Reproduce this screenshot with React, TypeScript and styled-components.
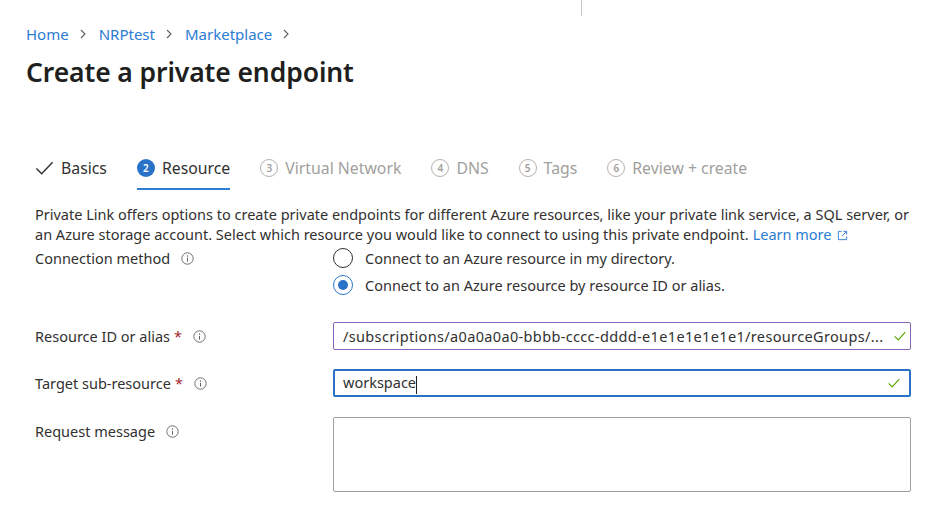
import React from "react";
import styled, { createGlobalStyle } from "styled-components";

const GlobalStyle = createGlobalStyle`
  body {
    margin: 0;
    background: #ffffff;
    font-family: "Noto Sans", "Open Sans", sans-serif;
    color: #323130;
  }
`;

const Page = styled.div`
  position: relative;
  width: 940px;
  height: 530px;
  overflow: hidden;
  padding: 22px 0 0 26px;
  box-sizing: border-box;
`;

const TopDivider = styled.div`
  position: absolute;
  left: 581px;
  top: 0;
  width: 1px;
  height: 16px;
  background: #c8c6c4;
`;

const Breadcrumb = styled.nav`
  display: flex;
  align-items: center;
  gap: 8px;
  font-size: 15px;
  height: 24px;
`;

const Crumb = styled.a`
  color: #2b7cd3;
  text-decoration: none;
`;

const Chevron = styled.svg`
  width: 12px;
  height: 12px;
  margin-right: 2px;
`;

const Title = styled.h1`
  margin: 8px 0 0;
  font-size: 26.5px;
  font-weight: 600;
  color: #201f1e;
  letter-spacing: -0.1px;
`;

const Tabs = styled.div`
  display: flex;
  align-items: center;
  gap: 30px;
  margin: 56px 0 0 9px;
  height: 44px;
`;

const Tab = styled.div<{ $active?: boolean; $done?: boolean }>`
  position: relative;
  display: flex;
  align-items: center;
  gap: 7px;
  height: 100%;
  font-size: 15.8px;
  color: ${({ $active, $done }) => ($active || $done ? "#323130" : "#a19f9d")};
  &::after {
    content: "";
    display: ${({ $active }) => ($active ? "block" : "none")};
    position: absolute;
    left: 0;
    right: 0;
    bottom: 0;
    height: 2px;
    background: #2f7dd2;
  }
`;

const StepNum = styled.span<{ $active?: boolean }>`
  display: inline-flex;
  align-items: center;
  justify-content: center;
  width: 18px;
  height: 18px;
  border-radius: 50%;
  box-sizing: border-box;
  font-size: 10px;
  font-weight: 600;
  background: ${({ $active }) => ($active ? "#2a72c8" : "transparent")};
  color: ${({ $active }) => ($active ? "#fff" : "#a19f9d")};
  border: ${({ $active }) => ($active ? "none" : "1.3px solid #b3b0ad")};
`;

const Content = styled.div`
  margin: 14px 0 0 9px;
  width: 880px;
`;

const Description = styled.p`
  margin: 0;
  font-size: 14.5px;
  line-height: 20px;
  color: #323130;
`;

const Link = styled.a`
  margin-left: 4px;
  color: #2b7cd3;
  text-decoration: none;
  white-space: nowrap;
`;

const ExternalIcon = styled.svg`
  width: 11px;
  height: 11px;
  margin-left: 5px;
  vertical-align: -1px;
`;

const FormGrid = styled.div`
  display: grid;
  grid-template-columns: 298px 578px;
  align-items: start;
`;

const Label = styled.div<{ $top?: number }>`
  display: flex;
  align-items: center;
  font-size: 14.5px;
  line-height: 20px;
  padding-top: ${({ $top }) => $top ?? 0}px;
  color: #323130;
`;

const Required = styled.span`
  color: #a4262c;
  margin-left: 4px;
`;

const InfoIcon = styled.svg`
  width: 13px;
  height: 13px;
  margin-left: 11px;
`;

const RadioGroup = styled.div`
  display: flex;
  flex-direction: column;
  gap: 7px;
  margin-top: -6px;
`;

const RadioRow = styled.label`
  display: flex;
  align-items: center;
  gap: 12px;
  font-size: 14.5px;
  height: 20px;
`;

const RadioCircle = styled.span<{ $checked?: boolean }>`
  width: 20px;
  height: 20px;
  border-radius: 50%;
  box-sizing: border-box;
  border: 1.3px solid ${({ $checked }) => ($checked ? "#2a72c8" : "#323130")};
  display: flex;
  align-items: center;
  justify-content: center;
  &::after {
    content: "";
    display: ${({ $checked }) => ($checked ? "block" : "none")};
    width: 10px;
    height: 10px;
    border-radius: 50%;
    background: #2a72c8;
  }
`;

const TextBox = styled.div<{ $border: string; $width: number }>`
  display: flex;
  align-items: center;
  height: 28px;
  box-sizing: border-box;
  border: ${({ $width }) => $width}px solid ${({ $border }) => $border};
  border-radius: 2px;
  padding: 0 8px 0 ${({ $width }) => 10 - $width}px;
  font-size: 14.5px;
  color: #323130;
`;

const BoxText = styled.span<{ $spacing?: number }>`
  flex: 1;
  white-space: nowrap;
  letter-spacing: ${({ $spacing }) => $spacing ?? 0}px;
`;

const Caret = styled.span`
  display: inline-block;
  width: 1px;
  height: 18px;
  background: #201f1e;
  vertical-align: middle;
`;

const CheckIcon = styled.svg`
  width: 14px;
  height: 14px;
  margin-left: 10px;
  flex-shrink: 0;
`;

const TextArea = styled.div`
  height: 75px;
  box-sizing: border-box;
  border: 1px solid #a19f9d;
  border-radius: 2px;
`;

const Row = styled.div<{ $mt: number }>`
  display: contents;
  & > * {
    margin-top: ${({ $mt }) => $mt}px;
  }
`;

const Info = () => (
  <InfoIcon viewBox="0 0 16 16">
    <circle cx="8" cy="8" r="7" fill="none" stroke="#605e5c" strokeWidth="1.1" />
    <circle cx="8" cy="5" r="0.9" fill="#605e5c" />
    <path d="M8 7.2v4.6" stroke="#605e5c" strokeWidth="1.3" />
  </InfoIcon>
);

const Check = () => (
  <CheckIcon viewBox="0 0 16 16">
    <path d="M2 8.5l4 4 8-9" fill="none" stroke="#57a300" strokeWidth="1.3" />
  </CheckIcon>
);

const ChevronRight = () => (
  <Chevron viewBox="0 0 12 12">
    <path d="M4 2l4 4-4 4" fill="none" stroke="#605e5c" strokeWidth="1.1" />
  </Chevron>
);

const steps = [
  { n: 3, label: "Virtual Network" },
  { n: 4, label: "DNS" },
  { n: 5, label: "Tags" },
  { n: 6, label: "Review + create" },
];

export default function App() {
  return (
    <Page>
      <GlobalStyle />
      <TopDivider />
      <Breadcrumb>
        <Crumb>Home</Crumb>
        <ChevronRight />
        <Crumb>NRPtest</Crumb>
        <ChevronRight />
        <Crumb>Marketplace</Crumb>
        <ChevronRight />
      </Breadcrumb>
      <Title>Create a private endpoint</Title>

      <Tabs>
        <Tab $done>
          <svg width="19" height="16" viewBox="0 0 20 16">
            <path d="M1.5 8.5l5.5 5.5L18.5 2" fill="none" stroke="#323130" strokeWidth="1.5" />
          </svg>
          Basics
        </Tab>
        <Tab $active>
          <StepNum $active>2</StepNum>
          Resource
        </Tab>
        {steps.map((s) => (
          <Tab key={s.n}>
            <StepNum>{s.n}</StepNum>
            {s.label}
          </Tab>
        ))}
      </Tabs>

      <Content>
        <Description>
          Private Link offers options to create private endpoints for different Azure resources, like your private
          link service, a SQL server, or an Azure storage account. Select which resource you would like to connect to
          using this private endpoint.
          <Link>
            Learn more
            <ExternalIcon viewBox="0 0 12 12">
              <path d="M5 1.5H1.5v9h9V7M7 1.5h3.5V5M10.5 1.5L5.5 6.5" fill="none" stroke="#2b7cd3" strokeWidth="1" />
            </ExternalIcon>
          </Link>
        </Description>

        <FormGrid>
          <Row $mt={4}>
            <Label>
              Connection method
              <Info />
            </Label>
            <RadioGroup>
              <RadioRow>
                <RadioCircle />
                Connect to an Azure resource in my directory.
              </RadioRow>
              <RadioRow>
                <RadioCircle $checked />
                Connect to an Azure resource by resource ID or alias.
              </RadioRow>
            </RadioGroup>
          </Row>

          <Row $mt={27}>
            <Label $top={4}>
              Resource ID or alias<Required>*</Required>
              <Info />
            </Label>
            <TextBox $border="#8764b8" $width={1}>
              <BoxText $spacing={0.35}>/subscriptions/a0a0a0a0-bbbb-cccc-dddd-e1e1e1e1e1e1/resourceGroups/...</BoxText>
              <Check />
            </TextBox>
          </Row>

          <Row $mt={19}>
            <Label $top={4}>
              Target sub-resource<Required>*</Required>
              <Info />
            </Label>
            <TextBox $border="#2a72c8" $width={2}>
              <BoxText>
                workspace
                <Caret />
              </BoxText>
              <Check />
            </TextBox>
          </Row>

          <Row $mt={20}>
            <Label $top={4}>
              Request message
              <Info />
            </Label>
            <TextArea />
          </Row>
        </FormGrid>
      </Content>
    </Page>
  );
}
